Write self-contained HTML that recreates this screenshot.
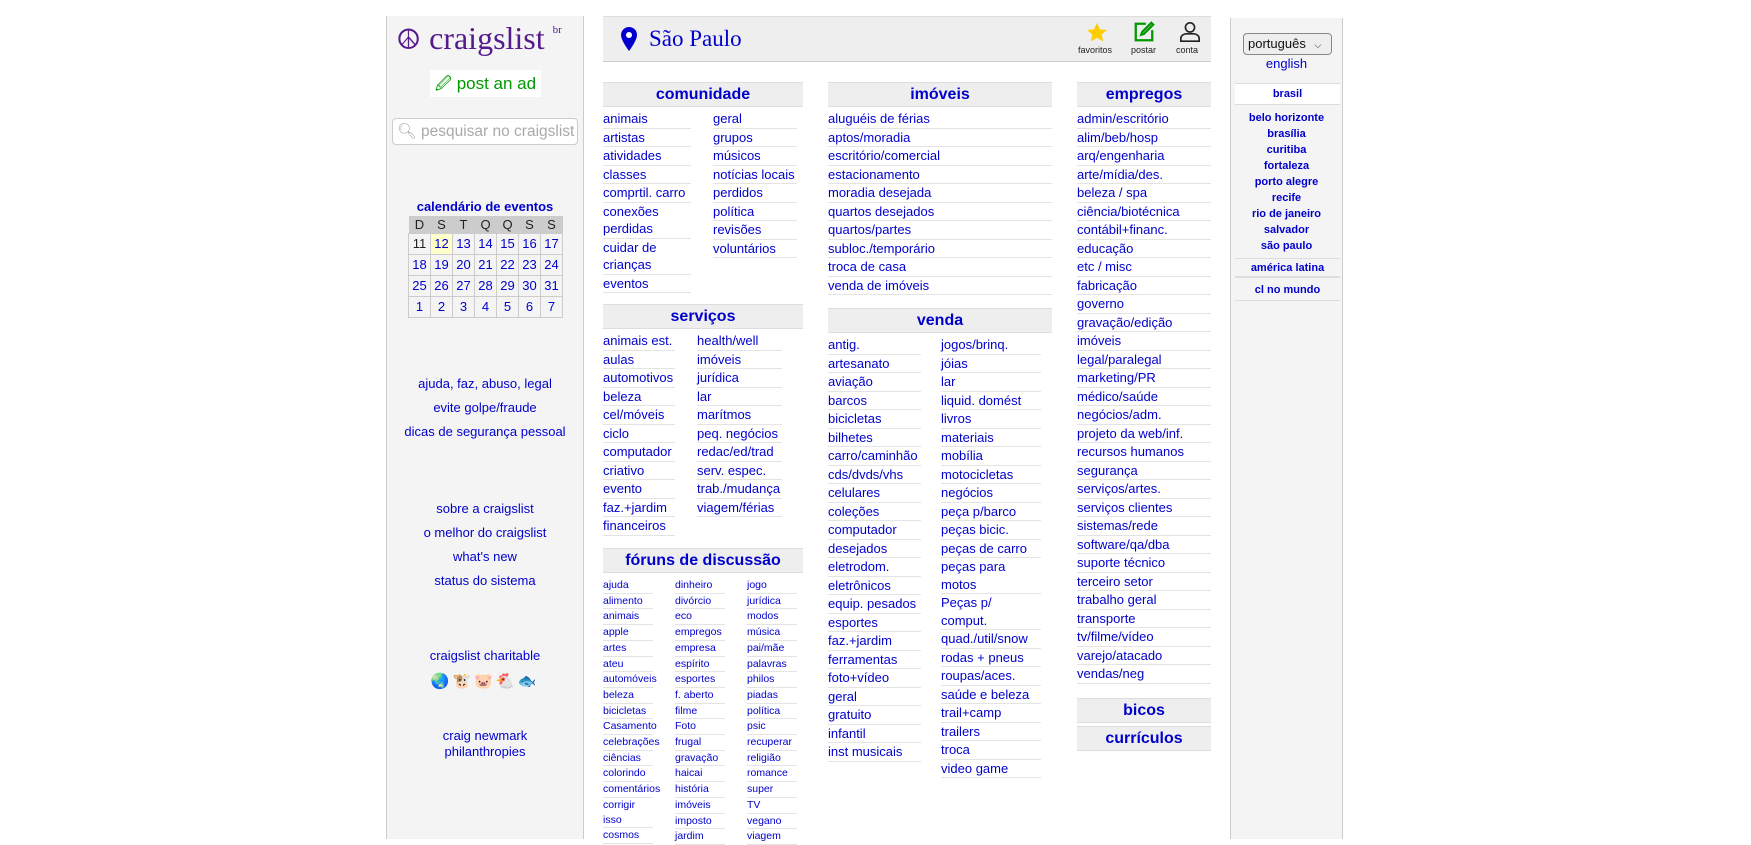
<!DOCTYPE html>
<html><head><meta charset="utf-8"><style>
*{box-sizing:border-box;margin:0;padding:0}
body{width:1751px;height:839px;background:#fff;font-family:"Liberation Sans",Arial,sans-serif;position:relative;overflow:hidden;color:#00c}
a{color:#00c;text-decoration:none}
.abs{position:absolute}
#left{left:386px;top:16px;width:198px;height:823px;background:#f4f4f4;border-left:1px solid #ccc;border-right:1px solid #ccc}
#right{left:1230px;top:18px;width:113px;height:821px;background:#f4f4f4;border-left:1px solid #ccc;border-right:1px solid #ccc}
.c{text-align:center;font-size:13px;width:100%;left:0}
.hd{background:#eee;border-top:1px solid #ddd;border-bottom:1px solid #ddd;height:25px;text-align:center;font-weight:bold;font-size:16px;line-height:24px;color:#00c}
.col{position:absolute}
.col a{display:block;font-size:13px;line-height:17.5px;border-bottom:1px solid #e4e4e4}
.sm a{font-size:10.5px;line-height:14.7px}
table{border-collapse:collapse;font-size:13px}
td{border:1px solid #ccc;width:22px;height:21px;text-align:center;color:#00c}
th{background:#ccc;font-weight:normal;color:#222;height:17px;width:22px}
.rs a{display:block;font-size:11px;font-weight:bold;line-height:16px;text-align:center}
</style></head><body>
<div id="left" class="abs">
 <div class="abs" style="left:9px;top:4px;font-family:'Liberation Serif',serif;font-size:32px;color:#551a8b;white-space:nowrap"><span style="font-size:28px">☮</span> craigslist <sup style="font-size:11px;vertical-align:16px">br</sup></div>
 <div class="abs" style="left:43px;top:54px;width:111px;height:27px;background:#fff;color:#090;font-size:17px;line-height:27px;text-align:center"><span style="font-size:16px">&#x1F589;</span> post an ad</div>
 <div class="abs" style="left:5px;top:102px;width:186px;height:27px;background:#fff;border:1px solid #ccc;border-radius:4px;color:#aaa;font-size:15.5px;line-height:25px;padding-left:4px;white-space:nowrap;overflow:hidden">🔍︎ pesquisar no craigslist</div>
 <div class="abs c" style="top:183px;font-weight:bold">calendário de eventos</div>
 <table class="abs" style="left:21px;top:200px">
  <tr><th>D</th><th>S</th><th>T</th><th>Q</th><th>Q</th><th>S</th><th>S</th></tr>
  <tr><td style="color:#222">11</td><td style="background:#ffc">12</td><td>13</td><td>14</td><td>15</td><td>16</td><td>17</td></tr>
  <tr><td>18</td><td>19</td><td>20</td><td>21</td><td>22</td><td>23</td><td>24</td></tr>
  <tr><td>25</td><td>26</td><td>27</td><td>28</td><td>29</td><td>30</td><td>31</td></tr>
  <tr><td>1</td><td>2</td><td>3</td><td>4</td><td>5</td><td>6</td><td>7</td></tr>
 </table>
 <div class="abs c" style="top:356px;line-height:24px">ajuda, faz, abuso, legal<br>evite golpe/fraude<br>dicas de segurança pessoal</div>
 <div class="abs c" style="top:481px;line-height:24px">sobre a craigslist<br>o melhor do craigslist<br>what's new<br>status do sistema</div>
 <div class="abs c" style="top:632px">craigslist charitable</div>
 <div class="abs c" style="top:656px;font-size:15px;letter-spacing:3px">🌏🐮🐷🐔🐟</div>
 <div class="abs c" style="top:712px;line-height:16px">craig newmark<br>philanthropies</div>
</div>

<div class="abs" style="left:603px;top:16px;width:608px;height:46px;background:#eee;border-top:1px solid #ddd;border-bottom:1px solid #ccc">
 <svg class="abs" style="left:18px;top:10px" width="16" height="24" viewBox="0 0 16 24"><path d="M8 0C3.6 0 0 3.5 0 8c0 5.5 8 16 8 16s8-10.5 8-16C16 3.5 12.4 0 8 0z" fill="#00c"/><circle cx="8" cy="8" r="3" fill="#fff"/></svg>
 <div class="abs" style="left:46px;top:9px;font-family:'Liberation Serif',serif;font-size:23px;color:#00c">São Paulo</div>
 <svg class="abs" style="left:483px;top:5px" width="22" height="22" viewBox="0 0 24 24"><path d="M12 1l3.2 7 7.6.7-5.8 5 1.8 7.5L12 17.3 5.2 21.2 7 13.7 1.2 8.7l7.6-.7z" fill="#fc0"/></svg>
 <svg class="abs" style="left:530px;top:4px" width="22" height="22" viewBox="0 0 24 24" fill="none" stroke="#090" stroke-width="2.5"><path d="M14 3H3v18h18V10"/><path d="M20 2l2 2-10 10-3 1 1-3z"/></svg>
 <svg class="abs" style="left:576px;top:4px" width="22" height="22" viewBox="0 0 24 24" fill="none" stroke="#222" stroke-width="1.8"><circle cx="12" cy="7" r="5"/><path d="M2 22v-3c0-3 3-5 6-5h8c3 0 6 2 6 5v3z"/></svg>
 <div class="abs" style="left:475px;top:28px;font-size:9px;color:#222">favoritos</div>
 <div class="abs" style="left:528px;top:28px;font-size:9px;color:#222">postar</div>
 <div class="abs" style="left:573px;top:28px;font-size:9px;color:#222">conta</div>
</div>

<div class="abs hd" style="left:603px;top:82px;width:200px">comunidade</div>
<div class="col" style="left:603px;top:110px;width:88px">
 <a>animais</a><a>artistas</a><a>atividades</a><a>classes</a><a>comprtil. carro</a><a>conexões perdidas</a><a>cuidar de crianças</a><a>eventos</a></div>
<div class="col" style="left:713px;top:110px;width:84px">
 <a>geral</a><a>grupos</a><a>músicos</a><a>notícias locais</a><a>perdidos</a><a>política</a><a>revisões</a><a>voluntários</a></div>

<div class="abs hd" style="left:603px;top:304px;width:200px">serviços</div>
<div class="col" style="left:603px;top:332px;width:72px">
 <a>animais est.</a><a>aulas</a><a>automotivos</a><a>beleza</a><a>cel/móveis</a><a>ciclo</a><a>computador</a><a>criativo</a><a>evento</a><a>faz.+jardim</a><a>financeiros</a></div>
<div class="col" style="left:697px;top:332px;width:85px">
 <a>health/well</a><a>imóveis</a><a>jurídica</a><a>lar</a><a>marítmos</a><a>peq. negócios</a><a>redac/ed/trad</a><a>serv. espec.</a><a>trab./mudança</a><a>viagem/férias</a></div>

<div class="abs hd" style="left:603px;top:548px;width:200px">fóruns de discussão</div>
<div class="col sm" style="left:603px;top:578px;width:50px">
 <a>ajuda</a><a>alimento</a><a>animais</a><a>apple</a><a>artes</a><a>ateu</a><a>automóveis</a><a>beleza</a><a>bicicletas</a><a>Casamento</a><a>celebrações</a><a>ciências</a><a>colorindo</a><a>comentários</a><a>corrigir isso</a><a>cosmos</a></div>
<div class="col sm" style="left:675px;top:578px;width:50px">
 <a>dinheiro</a><a>divórcio</a><a>eco</a><a>empregos</a><a>empresa</a><a>espírito</a><a>esportes</a><a>f. aberto</a><a>filme</a><a>Foto</a><a>frugal</a><a>gravação</a><a>haicai</a><a>história</a><a>imóveis</a><a>imposto</a><a>jardim</a></div>
<div class="col sm" style="left:747px;top:578px;width:50px">
 <a>jogo</a><a>jurídica</a><a>modos</a><a>música</a><a>pai/mãe</a><a>palavras</a><a>philos</a><a>piadas</a><a>política</a><a>psic</a><a>recuperar</a><a>religião</a><a>romance</a><a>super</a><a>TV</a><a>vegano</a><a>viagem</a></div>

<div class="abs hd" style="left:828px;top:82px;width:224px">imóveis</div>
<div class="col" style="left:828px;top:110px;width:224px">
 <a>aluguéis de férias</a><a>aptos/moradia</a><a>escritório/comercial</a><a>estacionamento</a><a>moradia desejada</a><a>quartos desejados</a><a>quartos/partes</a><a>subloc./temporário</a><a>troca de casa</a><a>venda de imóveis</a></div>

<div class="abs hd" style="left:828px;top:308px;width:224px">venda</div>
<div class="col" style="left:828px;top:336px;width:93px">
 <a>antig.</a><a>artesanato</a><a>aviação</a><a>barcos</a><a>bicicletas</a><a>bilhetes</a><a>carro/caminhão</a><a>cds/dvds/vhs</a><a>celulares</a><a>coleções</a><a>computador</a><a>desejados</a><a>eletrodom.</a><a>eletrônicos</a><a>equip. pesados</a><a>esportes</a><a>faz.+jardim</a><a>ferramentas</a><a>foto+vídeo</a><a>geral</a><a>gratuito</a><a>infantil</a><a>inst musicais</a></div>
<div class="col" style="left:941px;top:336px;width:100px">
 <a>jogos/brinq.</a><a>jóias</a><a>lar</a><a>liquid. domést</a><a>livros</a><a>materiais</a><a>mobília</a><a>motocicletas</a><a>negócios</a><a>peça p/barco</a><a>peças bicic.</a><a>peças de carro</a><a>peças para motos</a><a>Peças p/ comput.</a><a>quad./util/snow</a><a>rodas + pneus</a><a>roupas/aces.</a><a>saúde e beleza</a><a>trail+camp</a><a>trailers</a><a>troca</a><a>video game</a></div>

<div class="abs hd" style="left:1077px;top:82px;width:134px">empregos</div>
<div class="col" style="left:1077px;top:110px;width:134px">
 <a>admin/escritório</a><a>alim/beb/hosp</a><a>arq/engenharia</a><a>arte/mídia/des.</a><a>beleza / spa</a><a>ciência/biotécnica</a><a>contábil+financ.</a><a>educação</a><a>etc / misc</a><a>fabricação</a><a>governo</a><a>gravação/edição</a><a>imóveis</a><a>legal/paralegal</a><a>marketing/PR</a><a>médico/saúde</a><a>negócios/adm.</a><a>projeto da web/inf.</a><a>recursos humanos</a><a>segurança</a><a>serviços/artes.</a><a>serviços clientes</a><a>sistemas/rede</a><a>software/qa/dba</a><a>suporte técnico</a><a>terceiro setor</a><a>trabalho geral</a><a>transporte</a><a>tv/filme/vídeo</a><a>varejo/atacado</a><a>vendas/neg</a></div>
<div class="abs hd" style="left:1077px;top:698px;width:134px">bicos</div>
<div class="abs hd" style="left:1077px;top:726px;width:134px">currículos</div>

<div id="right" class="abs">
 <div class="abs" style="left:12px;top:15px;width:89px;height:22px;background:#eee;border:1px solid #888;border-radius:4px;font-size:13px;color:#111;line-height:20px;padding-left:4px">português <span style="font-size:9px;margin-left:5px">⌵</span></div>
 <div class="abs c" style="top:38px">english</div>
 <div class="abs" style="left:4px;top:65px;width:105px;height:22px;background:#fff;border-top:1px solid #ddd;border-bottom:1px solid #ddd;font-size:11px;font-weight:bold;text-align:center;line-height:20px">brasil</div>
 <div class="abs rs" style="left:0;top:92px;width:111px"><a>belo horizonte</a><a>brasília</a><a>curitiba</a><a>fortaleza</a><a>porto alegre</a><a>recife</a><a>rio de janeiro</a><a>salvador</a><a>são paulo</a></div>
 <div class="abs" style="left:4px;top:240px;width:105px;height:20px;border-top:1px solid #ddd;border-bottom:2px solid #ddd;font-size:11px;font-weight:bold;text-align:center;line-height:18px">américa latina</div>
 <div class="abs" style="left:4px;top:262px;width:105px;height:21px;border-bottom:1px solid #ddd;font-size:11px;font-weight:bold;text-align:center;line-height:20px">cl no mundo</div>
</div>
</body></html>
